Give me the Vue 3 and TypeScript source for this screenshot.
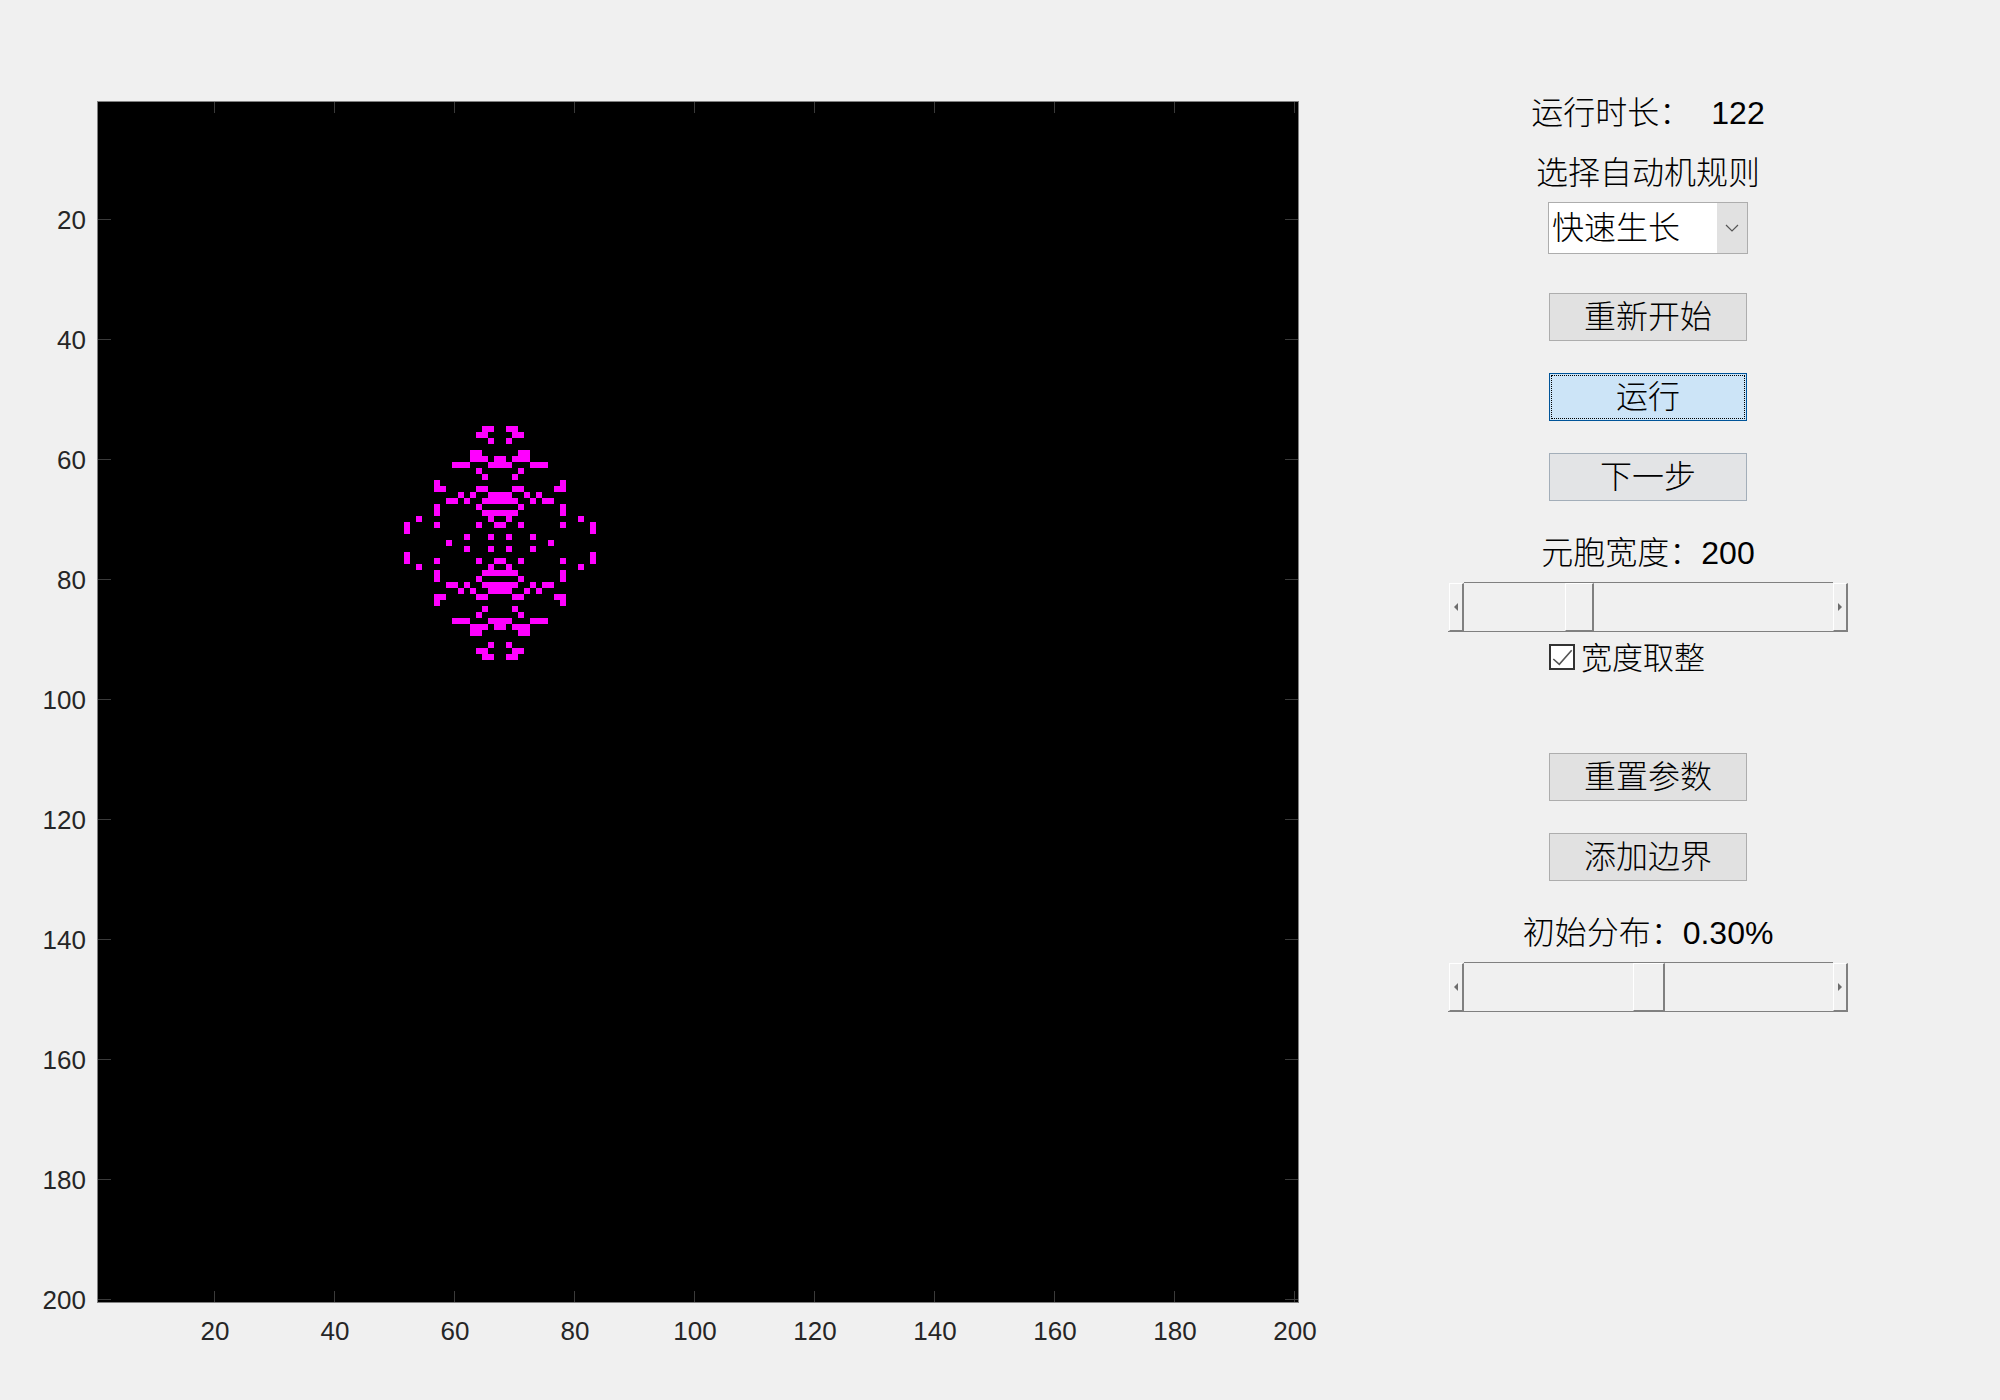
<script setup lang="ts">
// left half of the pattern, each row lists the lit columns
const halfRows: number[][] = [
  [13, 14], [12, 13], [14], [], [11, 12], [11, 12, 13, 15],
  [8, 9, 10, 14, 15], [12], [13], [5], [5, 6, 12, 13], [9, 11, 14, 15],
  [7, 8, 10, 13, 14, 15], [5, 12], [5, 13, 14, 15], [2, 14],
  [0, 5, 12, 15], [0], [10, 14], [7],
]

const cellX = 51
const cellY = 54
const lastRow = 38
const cells: { x: number; y: number }[] = []
halfRows.forEach((cols, r) => {
  const rows = r === lastRow - r ? [r] : [r, lastRow - r]
  rows.forEach(row => {
    cols.forEach(c => {
      cells.push({ x: cellX + c, y: cellY + row })
      cells.push({ x: cellX + 31 - c, y: cellY + row })
    })
  })
})

const ticks = Array.from({ length: 10 }, (_, i) => (i + 1) * 20)
const tickX = (t: number) => `${(t - 0.5) * 6 - 1}px`
const tickY = (t: number) => `${(t - 0.5) * 6}px`

const buttonsTop = [
  { label: '重新开始', cls: '' },
  { label: '运行', cls: 'focused' },
  { label: '下一步', cls: 'hover' },
]
const buttonsBottom = ['重置参数', '添加边界']
</script>

<template>
  <div class="figure">
    <div class="axes">
      <svg class="image" width="1200" height="1200" viewBox="0 0 200 200" shape-rendering="crispEdges">
        <rect width="200" height="200" fill="#000" />
        <rect v-for="(c, i) in cells" :key="i" :x="c.x" :y="c.y" width="1" height="1" fill="#f0f" />
      </svg>
      <template v-for="t in ticks" :key="t">
        <i class="tick tick-top" :style="{ left: tickX(t) }"></i>
        <i class="tick tick-bottom" :style="{ left: tickX(t) }"></i>
        <i class="tick tick-left" :style="{ top: tickY(t) }"></i>
        <i class="tick tick-right" :style="{ top: tickY(t) }"></i>
        <span class="xlabel" :style="{ left: tickY(t) }">{{ t }}</span>
        <span class="ylabel" :style="{ top: tickY(t) }">{{ t }}</span>
      </template>
    </div>

    <div class="panel">
      <div class="label first">运行时长：<span class="num gap">122</span></div>
      <div class="label rule">选择自动机规则</div>
      <div class="select">
        <span class="select-text">快速生长</span>
        <span class="select-arrow">
          <svg width="14" height="8" viewBox="0 0 14 8"><path d="M1 1l6 6 6-6" fill="none" stroke="#555" stroke-width="1.2" /></svg>
        </span>
      </div>

      <button
        v-for="b in buttonsTop"
        :key="b.label"
        type="button"
        class="btn"
        :class="b.cls"
      >{{ b.label }}</button>

      <div class="label section">元胞宽度：<span class="num">200</span></div>
      <div class="slider">
        <span class="arrow arrow-left"><i></i></span>
        <div class="track">
          <span class="thumb thumb-a"></span>
        </div>
        <span class="arrow arrow-right"><i></i></span>
      </div>
      <label class="check">
        <span class="box">
          <svg width="22" height="22" viewBox="0 0 22 22"><path d="M2.3 13l6 5.3L20.7 4.3" fill="none" stroke="#555" stroke-width="1.6" /></svg>
        </span>
        <span class="check-text">宽度取整</span>
      </label>

      <button
        v-for="(b, i) in buttonsBottom"
        :key="b"
        type="button"
        class="btn"
        :class="{ 'after-check': i === 0 }"
      >{{ b }}</button>

      <div class="label section">初始分布：<span class="num">0.30%</span></div>
      <div class="slider">
        <span class="arrow arrow-left"><i></i></span>
        <div class="track">
          <span class="thumb thumb-b"></span>
        </div>
        <span class="arrow arrow-right"><i></i></span>
      </div>
    </div>
  </div>
</template>

<style scoped>
.figure {
  width: 2000px;
  height: 1400px;
  box-sizing: border-box;
  padding: 102px 0 0 98px;
  background: #f0f0f0;
  display: flex;
  align-items: flex-start;
  font-family: "Liberation Sans", "Noto Sans CJK SC", sans-serif;
  overflow: hidden;
}

.axes {
  position: relative;
  width: 1200px;
  height: 1200px;
  flex: none;
  outline: 1px solid #808080;
}

.image {
  display: block;
}

.tick {
  position: absolute;
  background: #3a3a3a;
}

.tick-top,
.tick-bottom {
  width: 1px;
  height: 11px;
}

.tick-top {
  top: 0;
}

.tick-bottom {
  bottom: 0;
}

.tick-left,
.tick-right {
  width: 13px;
  height: 1px;
}

.tick-left {
  left: 0;
}

.tick-right {
  right: 0;
}

.xlabel,
.ylabel {
  position: absolute;
  font-size: 26px;
  line-height: 30px;
  color: #262626;
}

.xlabel {
  top: 1214px;
  transform: translateX(-50%);
}

.ylabel {
  right: 1212px;
  margin-top: 1px;
  transform: translateY(-50%);
}

.panel {
  width: 400px;
  margin-left: 150px;
  margin-top: -10px;
  display: flex;
  flex-direction: column;
  align-items: center;
  color: #000;
}

.label {
  height: 40px;
  line-height: 40px;
  font-size: 32px;
  white-space: nowrap;
  font-weight: 300;
}

.first {
  line-height: 42px;
}

.rule {
  margin-top: 21px;
}

.section {
  margin-top: 32px;
}

.num {
  font-size: 32px;
}

.gap {
  margin-left: 20px;
}

.select {
  width: 200px;
  height: 52px;
  margin-top: 9px;
  box-sizing: border-box;
  border: 1px solid #adadad;
  background: #fff;
  display: flex;
  align-items: stretch;
}

.select-text {
  flex: 1;
  padding-left: 3px;
  font-size: 32px;
  line-height: 50px;
  font-weight: 300;
}

.select-arrow {
  width: 30px;
  background: #e1e1e1;
  display: flex;
  align-items: center;
  justify-content: center;
}

.btn {
  width: 198px;
  height: 48px;
  margin-top: 32px;
  padding: 0;
  box-sizing: border-box;
  border: 1px solid #adadad;
  background: #e1e1e1;
  color: #000;
  font-family: inherit;
  font-size: 32px;
  line-height: 44px;
  font-weight: 300;
  position: relative;
}

.select + .btn {
  margin-top: 39px;
}

.btn.after-check {
  margin-top: 83px;
}

.btn.focused {
  border: 1px solid #005499;
  background: #cce4f7;
}

.btn.focused::after {
  content: "";
  position: absolute;
  inset: 1px;
  border: 1px dotted #000;
}

.btn.hover {
  border-color: #a3aeb9;
  background: #e3e4e6;
}

.slider {
  width: 400px;
  height: 50px;
  margin-top: 9px;
  box-sizing: border-box;
  border-bottom: 1px solid #808080;
  display: flex;
}

.arrow {
  width: 15px;
  margin-top: 1px;
  box-sizing: border-box;
  flex: none;
  display: flex;
  align-items: center;
  justify-content: center;
  border-top: 1px solid #fff;
  border-left: 1px solid #fff;
  border-right: 2px solid #808080;
  border-bottom: 1px solid #808080;
}

.arrow-left {
  margin-left: 1px;
}

.arrow i {
  width: 0;
  height: 0;
  border-top: 4px solid transparent;
  border-bottom: 4px solid transparent;
}

.arrow-left i {
  border-right: 4px solid #6d6d6d;
}

.arrow-right i {
  border-left: 4px solid #6d6d6d;
}

.track {
  flex: 1;
  position: relative;
  box-sizing: border-box;
  border-top: 1px solid #808080;
}

.thumb {
  position: absolute;
  top: 0;
  bottom: 0;
  box-sizing: border-box;
  background: #f0f0f0;
  border-top: 1px solid #fff;
  border-left: 1px solid #fff;
  border-right: 2px solid #808080;
  border-bottom: 1px solid #808080;
}

.thumb-a {
  left: 101px;
  width: 29px;
}

.thumb-b {
  left: 169px;
  width: 32px;
}

.check {
  display: flex;
  align-items: center;
  gap: 6px;
  margin-top: 12px;
  height: 26px;
  width: 198px;
  font-size: 31px;
  font-weight: 300;
}

.check-text {
  margin-top: -3px;
}

.box {
  width: 26px;
  height: 26px;
  box-sizing: border-box;
  border: 2px solid #333;
  background: #fff;
  display: flex;
  flex: none;
}
</style>

<style>
body {
  background: #f0f0f0;
}
</style>
